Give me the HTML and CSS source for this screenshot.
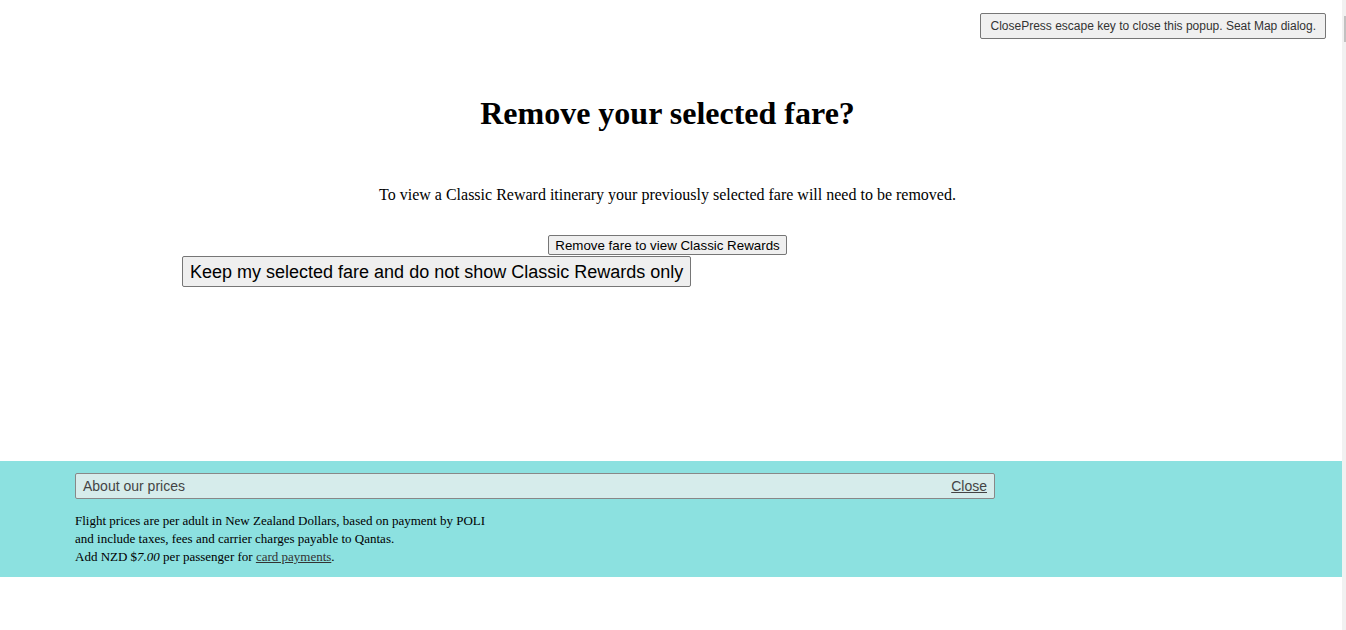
FILE: index.html
```html
<!DOCTYPE html>
<html lang="en">
<head>
<meta charset="utf-8">
<title>Remove your selected fare?</title>
<link rel="stylesheet" href="styles.css">
</head>
<body>
<div class="page">
  <div class="topbar">
    <button class="close-popup" type="button">ClosePress escape key to close this popup. Seat Map dialog.</button>
  </div>

  <section class="dialog">
    <h1 class="dialog-title">Remove your selected fare?</h1>
    <p class="dialog-text">To view a Classic Reward itinerary your previously selected fare will need to be removed.</p>
    <div class="dialog-actions">
      <button class="btn btn-remove" type="button">Remove fare to view Classic Rewards</button>
      <div class="keep-row">
        <button class="btn btn-keep" type="button">Keep my selected fare and do not show Classic Rewards only</button>
      </div>
    </div>
  </section>

  <footer class="prices">
    <div class="prices-bar">
      <span class="prices-label">About our prices</span>
      <a class="prices-close" href="#">Close</a>
    </div>
    <p class="prices-text">Flight prices are per adult in New Zealand Dollars, based on payment by POLI<br>
    and include taxes, fees and carrier charges payable to Qantas.<br>
    Add NZD $<em>7.00</em> per passenger for <a class="card-link" href="#">card payments</a>.</p>
  </footer>
</div>
<div class="scrollbar"><div class="scrollbar-thumb"></div></div>
</body>
</html>
```

FILE: styles.css
```css
html, body {
  margin: 0;
  padding: 0;
  background: #fff;
}

body {
  font-family: "Liberation Serif", "Times New Roman", serif;
  color: #000;
}

.page {
  margin-right: 4px;
}

/* top close button */
.topbar {
  display: flex;
  justify-content: flex-end;
  padding: 13px 16px 0 0;
}

.close-popup {
  font-family: "Liberation Sans", Arial, sans-serif;
  font-size: 12px;
  color: #333;
  background: #f0f0f0;
  border: 1px solid #767676;
  border-radius: 2px;
  height: 26px;
  padding: 0 9px;
  margin: 0;
}

/* dialog body */
.dialog {
  margin-left: 182px;
  width: 971px;
}

.dialog-title {
  font-size: 32px;
  font-weight: bold;
  line-height: 37px;
  text-align: center;
  margin: 56px 0 0;
}

.dialog-text {
  font-size: 16px;
  line-height: 18px;
  text-align: center;
  margin: 54px 0 0;
}

.dialog-actions {
  margin-top: 31px;
  text-align: center;
  line-height: 0;
}

.btn {
  font-family: "Liberation Sans", Arial, sans-serif;
  color: #000;
  background: #efefef;
  border: 1px solid #767676;
  border-radius: 2px;
  margin: 0;
  vertical-align: top;
}

.btn-remove {
  font-size: 13.33px;
  line-height: 15px;
  height: 20px;
  padding: 0 6px;
}

.keep-row {
  text-align: left;
  margin-top: 1px;
}

.btn-keep {
  font-size: 18px;
  line-height: 20px;
  height: 31px;
  padding: 0 7px;
}

/* prices footer */
.prices {
  margin-top: 174px;
  background: #8ce1e0;
  padding: 12px 0 11px 75px;
}

.prices-bar {
  width: 920px;
  box-sizing: border-box;
  height: 26px;
  display: flex;
  align-items: center;
  justify-content: space-between;
  padding: 0 7px;
  background: #d6eceb;
  border: 1px solid #888;
  border-radius: 2px;
  font-family: "Liberation Sans", Arial, sans-serif;
  font-size: 14px;
  color: #444;
}

.prices-close {
  color: #444;
  text-decoration: underline;
}

.prices-text {
  margin: 13px 0 0;
  font-size: 13px;
  line-height: 18px;
  color: #000;
}

.card-link {
  color: #333;
  text-decoration: underline;
}

/* narrow page scrollbar */
.scrollbar {
  position: fixed;
  top: 0;
  right: 0;
  width: 4px;
  height: 100%;
  background: #f1f1f1;
}

.scrollbar-thumb {
  margin: 16px 0 0 2px;
  width: 2px;
  height: 26px;
  background: #c1c1c1;
}
```
